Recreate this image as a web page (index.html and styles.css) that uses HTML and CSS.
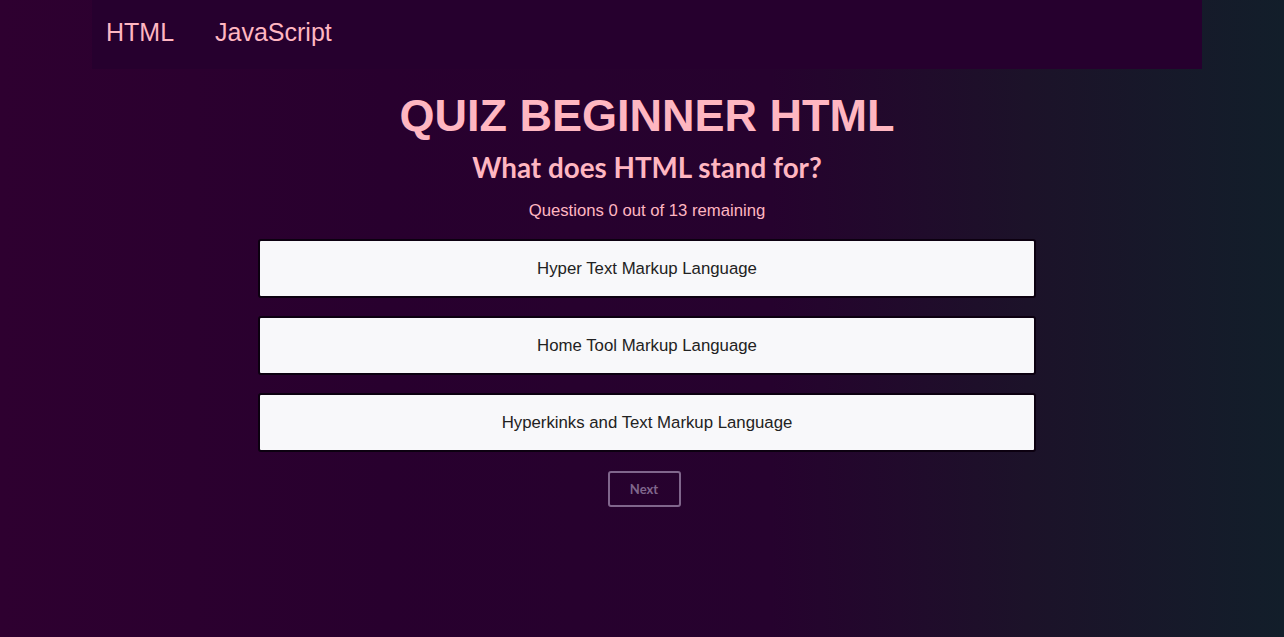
FILE: index.html
```html
<!DOCTYPE html>
<html>
<head>
<meta charset="utf-8">
<link rel="stylesheet" href="styles.css">
</head>
<body>
<div class="page">
  <nav class="nav">
    <a class="nav-link">HTML</a>
    <a class="nav-link">JavaScript</a>
  </nav>
  <main class="quiz">
    <h1 class="title">QUIZ BEGINNER HTML</h1>
    <h2 class="question">What does HTML stand for?</h2>
    <p class="remaining">Questions 0 out of 13 remaining</p>
    <div class="answers">
      <button class="answer">Hyper Text Markup Language</button>
      <button class="answer">Home Tool Markup Language</button>
      <button class="answer">Hyperkinks and Text Markup Language</button>
    </div>
    <button class="next" disabled>Next</button>
  </main>
</div>
</body>
</html>
```
FILE: styles.css
```css
html, body {
  margin: 0;
  height: 100%;
}
body {
  background: linear-gradient(to right, #2e0030 0%, #28002e 30%, #26022e 60%, #1c1229 80%, #121e2a 100%);
  font-family: "Liberation Sans", Arial, sans-serif;
  color: #ffb6c1;
}
.page {
  width: 1110px;
  margin-left: 92px;
}
.nav {
  display: flex;
  height: 69px;
  align-items: center;
  background: #26002e;
  padding-left: 14px;
  gap: 41px;
  box-sizing: border-box;
}
.nav-link {
  font-size: 25px;
  color: #ffb6c1;
  line-height: 1;
  margin-top: -4px;
}
.quiz {
  display: flex;
  flex-direction: column;
  align-items: center;
}
.title {
  margin: 24px 0 0;
  font-size: 45px;
  font-weight: bold;
  line-height: 45px;
}
.question {
  font-family: Lato, "Liberation Sans", sans-serif;
  font-weight: bold;
  font-size: 27.8px;
  line-height: 34px;
  margin: 13px 0 0;
}
.remaining {
  font-size: 16.7px;
  line-height: 20px;
  margin: 16px 0 0;
}
.answers {
  display: flex;
  flex-direction: column;
  gap: 18px;
  width: 778px;
  margin-top: 18px;
}
.answer {
  height: 59px;
  background: #f8f8fa;
  border: 2px solid #0c0010;
  border-radius: 3px;
  font-family: "Liberation Sans", Arial, sans-serif;
  font-size: 16.8px;
  color: #222;
}
.next {
  margin-top: 19px;
  margin-right: 6px;
  width: 73px;
  height: 36px;
  background: transparent;
  border: 2px solid #80668c;
  border-radius: 3px;
  font-family: Lato, "Liberation Sans", sans-serif;
  font-weight: bold;
  font-size: 13px;
  color: #80668c;
}
```
